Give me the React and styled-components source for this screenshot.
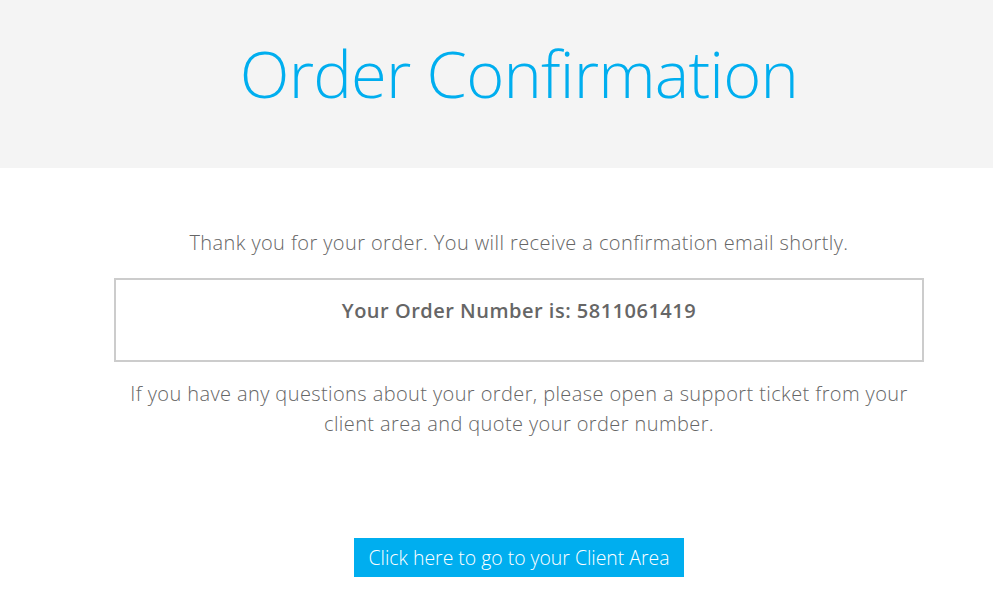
import React from "react";
import styled, { createGlobalStyle } from "styled-components";

const GlobalStyle = createGlobalStyle`
  body {
    margin: 0;
    background: #fff;
    font-family: "Open Sans", "Liberation Sans", sans-serif;
    overflow: hidden;
  }
`;

export default function App() {
  return (
    <>
      <GlobalStyle />
      <Header>
        <Title>Order Confirmation</Title>
      </Header>
      <Main>
        <Lead>Thank you for your order. You will receive a confirmation email shortly.</Lead>
        <OrderBox>
          <OrderNumber>Your Order Number is: 5811061419</OrderNumber>
        </OrderBox>
        <Note>
          If you have any questions about your order, please open a support ticket from your
          client area and quote your order number.
        </Note>
        <ClientButton href="#">Click here to go to your Client Area</ClientButton>
      </Main>
    </>
  );
}

const Header = styled.header`
  background: #f4f4f4;
  height: 168px;
  display: flex;
  justify-content: center;
  padding-left: 45px;
  box-sizing: border-box;
`;

const Title = styled.h1`
  margin: 0;
  padding-top: 28px;
  font-weight: 300;
  font-size: 65px;
  letter-spacing: -0.8px;
  line-height: 90px;
  color: #00aeef;
`;

const Main = styled.main`
  display: flex;
  flex-direction: column;
  align-items: center;
  padding: 0 0 0 45px;
  text-align: center;
`;

const Lead = styled.p`
  margin: 60px 0 0;
  font-weight: 300;
  font-size: 20px;
  letter-spacing: 0.4px;
  line-height: 30px;
  color: #666;
`;

const OrderBox = styled.div`
  width: 810px;
  height: 84px;
  box-sizing: border-box;
  margin-top: 20px;
  border: 2px solid #ccc;
  padding-top: 16px;
`;

const OrderNumber = styled.p`
  margin: 0;
  font-weight: 600;
  font-size: 20px;
  letter-spacing: 0.5px;
  line-height: 30px;
  color: #666;
`;

const Note = styled.p`
  width: 808px;
  margin: 17px 0 0;
  font-weight: 300;
  font-size: 20px;
  letter-spacing: 0.4px;
  line-height: 30px;
  color: #666;
`;

const ClientButton = styled.a`
  margin-top: 99px;
  display: inline-block;
  background: #00aeef;
  color: #fff;
  text-decoration: none;
  font-weight: 300;
  font-size: 19.4px;
  line-height: 39px;
  padding: 0 15px;
`;
